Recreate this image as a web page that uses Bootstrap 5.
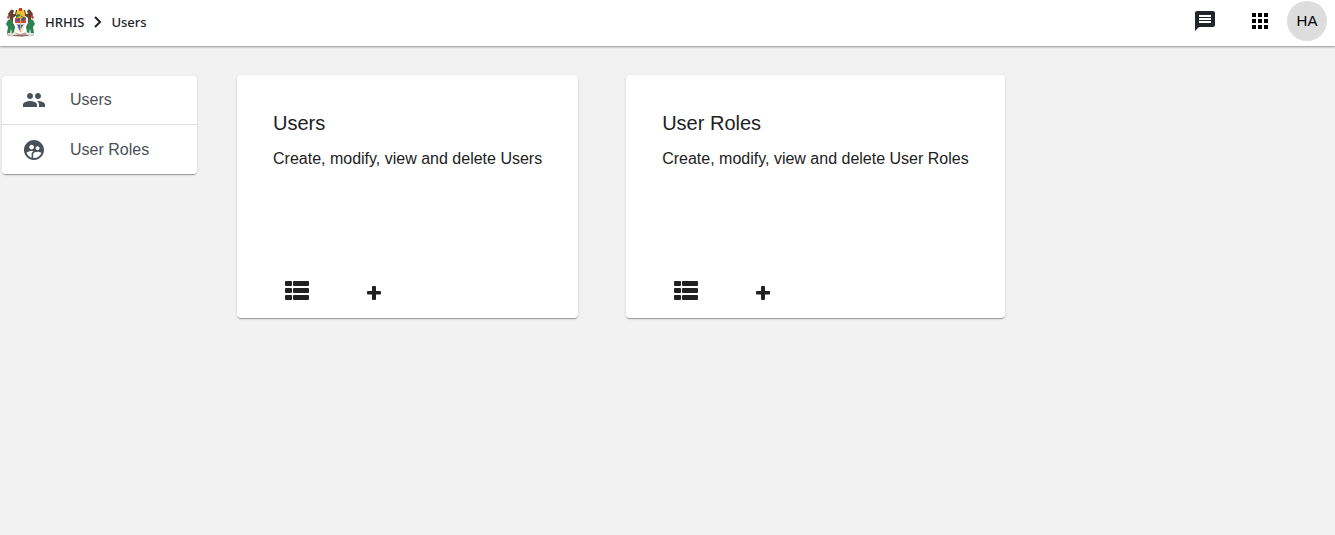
<!DOCTYPE html>
<html lang="en">
<head>
<meta charset="utf-8">
<meta name="viewport" content="width=device-width, initial-scale=1">
<title>HRHIS - Users</title>
<link href="https://cdn.jsdelivr.net/npm/bootstrap@5.3.0/dist/css/bootstrap.min.css" rel="stylesheet">
<style>
  body { background: #f2f2f2; color: #212121; font-family: "Liberation Sans", Arial, sans-serif; font-size: 16px; line-height: 24px; }
  svg { display: block; fill: currentColor; }
  .topbar { height: 46px; padding: 0 8px 4px 4px; box-shadow: 0 1px 2px rgba(0,0,0,.4); }
  .crumbs { font: 500 13px/20px "Noto Sans", "Open Sans", sans-serif; color: #212529; gap: 8px; padding-top: 2px; }
  .crumbs a, .crumbs a:hover { color: inherit; }
  .tool-btn { color: #212529; margin-right: 15px; }
  .avatar-btn { width: 40px; height: 40px; background: #ddd; color: #000; margin-left: 15px; font-size: 15px; line-height: 40px; }
  .raised { border: 0; border-radius: 4px; box-shadow: 0 2px 1px -1px rgba(0,0,0,.2), 0 1px 1px rgba(0,0,0,.14), 0 1px 3px rgba(0,0,0,.12); }
  .page-main { padding: 29px 2px; gap: 40px; }
  .side-menu { width: 195px; margin-top: 1px; }
  .side-link { height: 48px; padding: 0 20px; gap: 24px; border: 0; color: #495057; }
  .side-link + .side-link { height: 50px; border-top: 1px solid #dfdfdf; }
  .tiles { gap: 48px; }
  .tile { min-height: 243px; padding: 36px 36px 18px; color: #212121; }
  .tile h2 { font-size: 20px; line-height: 24px; margin-bottom: 12px; font-weight: 400; }
  .tile-actions { gap: 58px; padding-left: 12px; }
</style>
</head>
<body>
<svg class="d-none" aria-hidden="true">
  <symbol id="i-list" viewBox="0 0 24 19">
    <rect x="0" y="0" width="7" height="5" rx="1"/><rect x="8" y="0" width="16" height="5" rx="1"/>
    <rect x="0" y="7" width="7" height="5" rx="1"/><rect x="8" y="7" width="16" height="5" rx="1"/>
    <rect x="0" y="14" width="7" height="5" rx="1"/><rect x="8" y="14" width="16" height="5" rx="1"/>
  </symbol>
  <symbol id="i-plus" viewBox="0 0 14 14"><path d="M6 0h2q1 0 1 1v4h4q1 0 1 1v1.500q0 1-1 1H9V13q0 1-1 1H6q-1 0-1-1V8.500H1q-1 0-1-1V6q0-1 1-1h4V1q0-1 1-1z"/></symbol>
</svg>

<header class="topbar bg-white d-flex align-items-center justify-content-between">
  <nav class="crumbs d-flex align-items-center" aria-label="Breadcrumb">
    <a href="#" aria-label="Home">
      <!-- Coat of arms: two supporters around a quartered shield -->
      <svg width="33" height="32" viewBox="0 0 33 32">
        <path d="M3 27q3-2 7-1l6 2 7-2q4-1 7 1v2q-3 2-7 1l-6 1-7-1q-4 1-7-1z" fill="#b9a79c"/>
        <path d="M4 26l2-1 2 3 3-3 2 4-5 1-4-2zM22 25l3 2 3-2 2 3-4 2-4-2z" fill="#e2e4e1"/>
        <path d="M6 5q2-3 4 0l-1 3 2 0 1-4h1l0 5-4 3v5l2 4H5l1-9-2-4z" fill="#66402f"/>
        <path d="M27 5q-2-3-4 0l1 3-2 0-1-4h-1l0 5 4 3v5l-2 4h6l-1-9 2-4z" fill="#66402f"/>
        <path d="M4 14l4-1 1 5 2 3-1 5-2 1-1-4-1 4H3l1-6-2-3zM29 14l-4-1-1 5-2 3 1 5 2 1 1-4 1 4h3l-1-6 2-3z" fill="#2b8350"/>
        <path d="M4 9l2 1-1 3-2-1zM29 9l-2 1 1 3 2-1z" fill="#b94a40"/>
        <path d="M12 9q0-5 4.500-7Q21 4 21 9v8q-1 6-4.500 10Q13 23 12 17z" fill="#edc02d"/>
        <path d="M15 2h3v3h-3z" fill="#c93b29"/>
        <path d="M12 9l3-1 6 4v1l-5-3-4 2z" fill="#347a4b"/>
        <path d="M11 12h5v5h-5zM17 12h5v5h-5z" fill="#ce4939"/>
        <path d="M12 14l4-2v4zM18 12l4-1-3 5z" fill="#3654aa"/>
        <path d="M12 17h9q-1 6-4.500 10Q13 23 12 17z" fill="#e8edf4"/>
        <path d="M13 18l2 1 1-1 2 1 2-1-2 3-2 4-2-4z" fill="#465ba5"/>
        <path d="M16 5h1v21h-1z" fill="#dfb52f"/>
        <path d="M8 29h17l-2 1H10z" fill="#95605b"/>
      </svg>
    </a>
    <a class="text-decoration-none" href="#">HRHIS</a>
    <svg width="11" height="14" viewBox="0 0 11 14" aria-hidden="true"><path d="M3 2l5 5-5 5" fill="none" stroke="currentColor" stroke-width="2"/></svg>
    <a class="text-decoration-none" href="#" aria-current="page">Users</a>
  </nav>
  <div class="d-flex align-items-center">
    <button class="btn p-0 border-0 tool-btn" type="button" aria-label="Messages">
      <svg width="24" height="24" viewBox="0 0 24 24"><path d="M20 2H4c-1.100 0-2 .9-2 2v18l4-4h14c1.100 0 2-.9 2-2V4c0-1.100-.9-2-2-2zm-2 12H6v-2h12v2zm0-3H6V9h12v2zm0-3H6V6h12v2z"/></svg>
    </button>
    <button class="btn p-0 border-0 text-black ms-3" type="button" aria-label="Apps">
      <svg width="24" height="24" viewBox="0 0 24 24"><path d="M4 8h4V4H4v4zm6 12h4v-4h-4v4zm-6 0h4v-4H4v4zm0-6h4v-4H4v4zm6 0h4v-4h-4v4zm6-10v4h4V4h-4zm-6 4h4V4h-4v4zm6 6h4v-4h-4v4zm0 6h4v-4h-4v4z"/></svg>
    </button>
    <button class="avatar-btn btn rounded-circle border-0 p-0" type="button">HA</button>
  </div>
</header>

<div class="page-main d-flex align-items-start">
  <nav class="side-menu raised list-group flex-shrink-0" aria-label="Sections">
    <a class="side-link list-group-item d-flex align-items-center" href="#">
      <svg width="24" height="24" viewBox="0 0 24 24" aria-hidden="true"><path d="M16 11c1.660 0 2.990-1.340 2.990-3S17.660 5 16 5s-3 1.340-3 3 1.340 3 3 3zm-8 0c1.660 0 2.990-1.340 2.990-3S9.660 5 8 5 5 6.340 5 8s1.340 3 3 3zm0 2c-2.330 0-7 1.170-7 3.500V19h14v-2.500c0-2.330-4.670-3.500-7-3.500zm8 0c-.29 0-.62.020-.97.050 1.160.84 1.970 1.970 1.970 3.450V19h6v-2.500c0-2.330-4.670-3.500-7-3.500z"/></svg>
      <span>Users</span>
    </a>
    <a class="side-link list-group-item d-flex align-items-center" href="#">
      <svg width="24" height="24" viewBox="0 0 24 24" aria-hidden="true"><path d="M11.990 2c-5.520 0-10 4.480-10 10s4.480 10 10 10 10-4.480 10-10-4.480-10-10-10zm3.610 6.340c1.070 0 1.930.86 1.930 1.930s-.86 1.930-1.930 1.930-1.930-.86-1.930-1.930c-.01-1.070.86-1.930 1.930-1.930zm-6-1.580c1.300 0 2.360 1.060 2.360 2.360s-1.060 2.360-2.360 2.360-2.360-1.060-2.360-2.360c0-1.310 1.050-2.360 2.360-2.360zm0 9.130v3.750c-2.400-.75-4.300-2.600-5.140-4.960 1.050-1.120 3.670-1.690 5.140-1.690.53 0 1.200.08 1.900.22-1.640.87-1.900 2.020-1.900 2.680zM11.990 20c-.27 0-.53-.01-.79-.04v-4.070c0-1.420 2.940-2.130 4.400-2.130 1.070 0 2.920.39 3.840 1.150-1.170 2.970-4.060 5.090-7.450 5.090z"/></svg>
      <span>User Roles</span>
    </a>
  </nav>

  <main class="tiles d-flex flex-wrap">
    <section class="tile card raised">
      <h2>Users</h2>
      <p class="mb-0">Create, modify, view and delete Users</p>
      <div class="tile-actions d-flex align-items-end mt-auto">
        <button class="btn p-0 border-0 text-reset" type="button" aria-label="List Users"><svg width="24" height="19"><use href="#i-list"/></svg></button>
        <button class="btn p-0 border-0 text-reset" type="button" aria-label="Add User"><svg width="14" height="14"><use href="#i-plus"/></svg></button>
      </div>
    </section>
    <section class="tile card raised">
      <h2>User Roles</h2>
      <p class="mb-0">Create, modify, view and delete User Roles</p>
      <div class="tile-actions d-flex align-items-end mt-auto">
        <button class="btn p-0 border-0 text-reset" type="button" aria-label="List User Roles"><svg width="24" height="19"><use href="#i-list"/></svg></button>
        <button class="btn p-0 border-0 text-reset" type="button" aria-label="Add User Role"><svg width="14" height="14"><use href="#i-plus"/></svg></button>
      </div>
    </section>
  </main>
</div>
<script src="https://cdn.jsdelivr.net/npm/bootstrap@5.3.0/dist/js/bootstrap.bundle.min.js"></script>
</body>
</html>
